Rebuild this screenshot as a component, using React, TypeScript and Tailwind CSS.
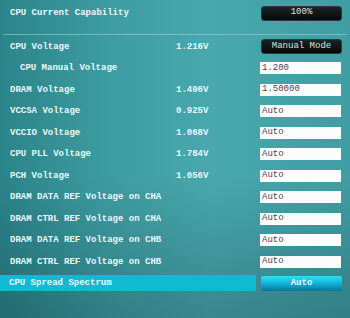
import React from 'react';

type Row = {
    label: string;
    value?: string;
    input?: string;
    indent?: boolean;
};

const rows: Row[] = [
    { label: 'CPU Manual Voltage', input: '1.200', indent: true },
    { label: 'DRAM Voltage', value: '1.496V', input: '1.50000' },
    { label: 'VCCSA Voltage', value: '0.925V', input: 'Auto' },
    { label: 'VCCIO Voltage', value: '1.068V', input: 'Auto' },
    { label: 'CPU PLL Voltage', value: '1.784V', input: 'Auto' },
    { label: 'PCH Voltage', value: '1.056V', input: 'Auto' },
    { label: 'DRAM DATA REF Voltage on CHA', input: 'Auto' },
    { label: 'DRAM CTRL REF Voltage on CHA', input: 'Auto' },
    { label: 'DRAM DATA REF Voltage on CHB', input: 'Auto' },
    { label: 'DRAM CTRL REF Voltage on CHB', input: 'Auto' },
];

function DarkButton({ children }: { children: React.ReactNode }) {
    return (
        <div className="w-[81px] h-[15px] rounded-[3px] bg-[linear-gradient(to_bottom,#1c2426,#050808)] border border-[#2a3a3c] flex items-center justify-center text-[9px] text-[#d8e4e4]">
            {children}
        </div>
    );
}

export default function App() {
    return (
        <div
            className="w-[350px] h-[318px] overflow-hidden text-[#eef8f8] bg-[linear-gradient(to_bottom,rgba(0,0,0,0)_55%,rgba(0,20,25,0.22)),linear-gradient(to_right,#2b8489,#3d9ca1_30%,#48a8ae_60%,#3f9ea4)]"
            style={{ fontFamily: '"Liberation Mono", "DejaVu Sans Mono", monospace' }}
        >
            {/* Top section */}
            <div className="pt-[5px] pl-[10px] pr-[8px] flex items-center h-[21px]">
                <div className="flex-1 text-[9px] font-bold pt-[2px]">CPU Current Capability</div>
                <DarkButton>100%</DarkButton>
            </div>
            <div className="mt-[13px] mx-[3px] h-px bg-[#9ad0d3]/60" />

            <div className="pt-[1px]">
                {/* CPU Voltage */}
                <div className="h-[21.5px] flex items-center pl-[10px] pr-[8px]">
                    <div className="w-[166px] text-[9px] font-bold pt-[1px]">CPU Voltage</div>
                    <div className="flex-1 text-[9px] font-bold pt-[1px]">1.216V</div>
                    <DarkButton>Manual Mode</DarkButton>
                </div>

                {rows.map((row) => (
                    <div key={row.label} className="h-[21.5px] flex items-center pl-[10px] pr-[9px]">
                        <div className={`w-[166px] text-[9px] font-bold pt-[1px] ${row.indent ? 'pl-[10px]' : ''}`}>{row.label}</div>
                        <div className="flex-1 text-[9px] font-bold pt-[1px]">{row.value}</div>
                        <div className="w-[81px] h-[12px] bg-[#fbfdfd] flex items-center px-[2px] text-[9px] text-[#4a3f5c]">
                            {row.input}
                        </div>
                    </div>
                ))}

                {/* Selected row */}
                <div className="h-[21.5px] flex items-center pr-[8px]">
                    <div className="w-[256px] h-[16px] bg-[#12b9d3] flex items-center pl-[9px] text-[9px] font-bold">
                        CPU Spread Spectrum
                    </div>
                    <div className="flex-1" />
                    <div className="w-[81px] h-[15px] rounded-[2px] bg-[linear-gradient(to_bottom,#2fe0f5,#10b4d6_50%,#0a7597)] flex items-center justify-center text-[9px] font-bold text-[#eafcff]">
                        Auto
                    </div>
                </div>
            </div>
        </div>
    );
}
